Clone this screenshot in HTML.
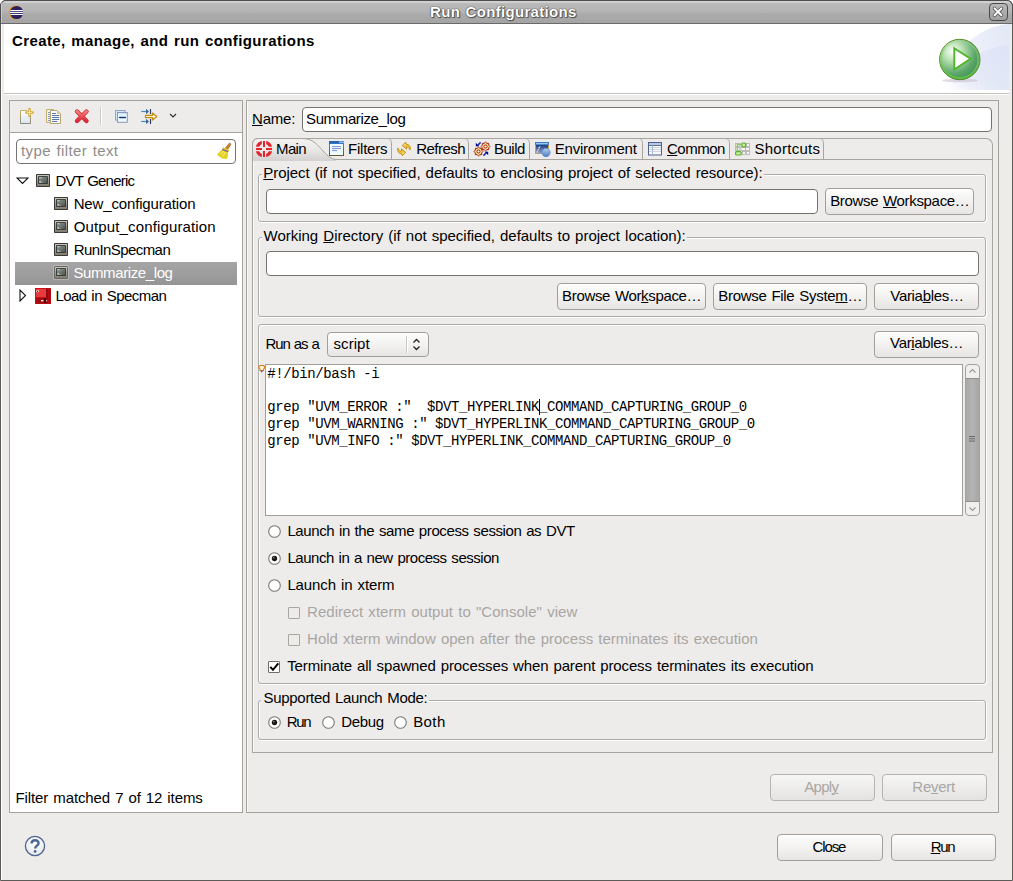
<!DOCTYPE html>
<html><head><meta charset="utf-8"><style>
html,body{margin:0;padding:0;width:1013px;height:881px;overflow:hidden;background:#fff}
u{text-decoration:underline;text-underline-offset:1px;text-decoration-thickness:1px}
</style></head><body>
<div style="position:absolute;left:0;top:0;width:1013px;height:881px;overflow:hidden">
<div style="position:absolute;left:0px;top:0px;width:1013px;height:881px;box-sizing:border-box;background:#edeceb;border:1px solid #5d5b57;border-radius:6px 6px 0 0"></div><div style="position:absolute;left:1px;top:24px;width:1px;height:856px;box-sizing:border-box;background:#fff"></div><div style="position:absolute;left:0px;top:0px;width:1013px;height:24px;box-sizing:border-box;background:linear-gradient(#d0d0d0 0px,#d0d0d0 2px,#bababa 2px,#b4b4b4 11px,#ababab 13px,#a4a4a4 22px);border:1px solid #4f4f4f;border-bottom-color:#6a6a6a;border-radius:6px 6px 0 0"></div><div style="position:absolute;left:1px;top:1px;width:1px;height:22px;box-sizing:border-box;background:rgba(255,255,255,.35)"></div><svg style="position:absolute;left:8px;top:5px;" width="17" height="16" viewBox="0 0 17 16"><circle cx="7.6" cy="7.5" r="6.9" fill="#f39c12"/><circle cx="8.6" cy="7.5" r="6.6" fill="#2c2160"/><rect x="2.3" y="5" width="12.6" height="1.1" fill="#fff"/><rect x="2.0" y="6.9" width="13.2" height="1.1" fill="#fff"/><rect x="2.3" y="8.9" width="12.6" height="1.1" fill="#fff"/></svg><div style="position:absolute;left:430.00px;top:2.00px;font:bold 15px 'Liberation Sans', sans-serif;line-height:20px;white-space:pre;color:#fff;letter-spacing:0.315px;word-spacing:1.00px;text-shadow:0 0 1px #333,0 0 1px #333,1px 1px 1px #555">Run Configurations</div><div style="position:absolute;left:989px;top:3px;width:19px;height:18px;box-sizing:border-box;border:1px solid #4a4a4a;border-radius:4px;background:linear-gradient(#b9b9b9,#a0a0a0)"></div><svg style="position:absolute;left:990px;top:4px;" width="17" height="16" viewBox="0 0 17 16"><path d="M4.6 4.4 L11.4 11.3 M11.4 4.4 L4.6 11.3" stroke="#5a5a5a" stroke-width="3.6" stroke-linecap="round"/><path d="M4.6 4.4 L11.4 11.3 M11.4 4.4 L4.6 11.3" stroke="#fff" stroke-width="2" stroke-linecap="round"/></svg><div style="position:absolute;left:4px;top:24px;width:1005px;height:69px;box-sizing:border-box;background:#fff"></div><div style="position:absolute;left:4px;top:93px;width:1005px;height:1px;box-sizing:border-box;background:#c3c1bd"></div><div style="position:absolute;left:4px;top:94px;width:1005px;height:1px;box-sizing:border-box;background:#fff"></div><div style="position:absolute;left:12.00px;top:31.00px;font:bold 15px 'Liberation Sans', sans-serif;line-height:20px;white-space:pre;color:#000;letter-spacing:0.404px;word-spacing:1.00px;">Create, manage, and run configurations</div><svg style="position:absolute;left:920px;top:24px;" width="89" height="66" viewBox="0 0 89 66"><defs><linearGradient id="sw" x1="0" y1="0.7" x2="1" y2="0.3"><stop offset="0" stop-color="#fff" stop-opacity="0"/><stop offset="0.35" stop-color="#f3f5fc"/><stop offset="1" stop-color="#e4e9f7"/></linearGradient><linearGradient id="sw2" x1="0" y1="1" x2="1" y2="0"><stop offset="0" stop-color="#dfe6f6" stop-opacity="0"/><stop offset="0.45" stop-color="#e0e6f6"/><stop offset="1" stop-color="#dbe2f5"/></linearGradient></defs><path d="M89 0 C66 2 42 14 10 66 L89 66 Z" fill="url(#sw)"/><path d="M89 21 C74 22 60 27 48 38 C40 46 34 56 28 66 L89 66 Z" fill="url(#sw2)" opacity=".75"/></svg><svg style="position:absolute;left:936px;top:36px;" width="48" height="50" viewBox="0 0 48 50"><defs><radialGradient id="pg" cx="0.33" cy="0.3" r="0.8"><stop offset="0" stop-color="#ffffff"/><stop offset="0.3" stop-color="#b8e0b0"/><stop offset="0.7" stop-color="#5aa56a"/><stop offset="1" stop-color="#3c8a50"/></radialGradient><linearGradient id="pr" x1="0" y1="0" x2="0" y2="1"><stop offset="0" stop-color="#9cd890" stop-opacity=".3"/><stop offset="1" stop-color="#5cc040"/></linearGradient></defs><ellipse cx="24" cy="44.5" rx="18" ry="1.8" fill="#c4b4c8" opacity=".5"/><circle cx="23.8" cy="23.5" r="20.2" fill="url(#pg)" stroke="#5d8a2a" stroke-width="1"/><circle cx="23.8" cy="23.5" r="18.6" fill="none" stroke="url(#pr)" stroke-width="2"/><path d="M18.3 12.2 L34.5 22.8 L18.3 33.5 Z" fill="#fff" stroke="#4fb62c" stroke-width="1.9" stroke-linejoin="miter"/></svg><div style="position:absolute;left:9px;top:100px;width:234px;height:713px;box-sizing:border-box;background:#fff;border:1px solid #a5a29e"></div><div style="position:absolute;left:10px;top:101px;width:232px;height:31px;box-sizing:border-box;background:#edeceb"></div><div style="position:absolute;left:10px;top:132px;width:232px;height:1px;box-sizing:border-box;background:#a5a29e"></div><svg style="position:absolute;left:17px;top:106px;" width="20" height="20" viewBox="0 0 20 20"><defs><linearGradient id="nd" x1="0" y1="0" x2="0" y2="1"><stop offset="0" stop-color="#fbfcff"/><stop offset="1" stop-color="#dbe6f6"/></linearGradient><linearGradient id="nb" x1="0" y1="0" x2="0" y2="1"><stop offset="0" stop-color="#c9b266"/><stop offset="1" stop-color="#8f8b78"/></linearGradient></defs><path d="M3.5 4.5 H10 M13.5 10 V17.5 H3.5 V4.5" fill="url(#nd)" stroke="url(#nb)"/><rect x="4" y="5" width="9" height="12" fill="url(#nd)"/><path d="M12.5 3 V10 M9.3 6.5 H15.7" stroke="#d2ac3a" stroke-width="2.4" stroke-linecap="round"/><path d="M12.5 3.6 V9.4 M9.9 6.5 H15.1" stroke="#fbe79a" stroke-width="0.9"/></svg><svg style="position:absolute;left:43px;top:106px;" width="20" height="20" viewBox="0 0 20 20"><path d="M3.5 3.5 H10.5 L11 4 V16.5 H3.5 Z" fill="#eef3fa" stroke="#c2ae6e"/><path d="M7.5 4.5 H14 L17.5 8 V17.5 H7.5 Z" fill="#f6f9fd" stroke="#b8a670"/><path d="M14 4.5 V8 H17.5 Z" fill="#dcc078"/><path d="M9.5 7.5 H12.5 M9.5 9.5 H15.8 M9.5 11.5 H15.8 M9.5 13.5 H15.8 M9.5 15.5 H13.8" stroke="#5673a8" stroke-width="1.1" stroke-linecap="round"/><path d="M5.2 6.5 H6.8 M5.2 8.5 H6.8 M5.2 10.5 H6.8 M5.2 12.5 H6.8 M5.2 14.5 H6.8" stroke="#6a86b6" stroke-width="1"/></svg><svg style="position:absolute;left:72px;top:106px;" width="20" height="20" viewBox="0 0 20 20"><defs><linearGradient id="xg" x1="0" y1="0" x2="0" y2="1"><stop offset="0" stop-color="#f47c7c"/><stop offset="1" stop-color="#d8283a"/></linearGradient></defs><path d="M5 5.5 L14.5 15 M14.5 5.5 L5 15" stroke="#cf2a33" stroke-width="4.4" stroke-linecap="round"/><path d="M5 5.5 L14.5 15 M14.5 5.5 L5 15" stroke="url(#xg)" stroke-width="3" stroke-linecap="round"/></svg><div style="position:absolute;left:100px;top:107px;width:1px;height:18px;box-sizing:border-box;background:#cfcdc9"></div><div style="position:absolute;left:101px;top:107px;width:1px;height:18px;box-sizing:border-box;background:#fff"></div><svg style="position:absolute;left:112px;top:106px;" width="20" height="20" viewBox="0 0 20 20"><defs><linearGradient id="cg" x1="0" y1="0" x2="0" y2="1"><stop offset="0" stop-color="#c2e4fb"/><stop offset="0.45" stop-color="#fafdff"/><stop offset="1" stop-color="#e6f4fd"/></linearGradient></defs><rect x="3.5" y="4.5" width="9.5" height="9.5" fill="#cde9fb" stroke="#99a3bd"/><rect x="5.5" y="6.5" width="9.8" height="9.8" fill="url(#cg)" stroke="#8e98b2"/><path d="M7.6 11.5 H13.4" stroke="#0b3d7a" stroke-width="1.6" stroke-linecap="round"/></svg><svg style="position:absolute;left:139px;top:106px;" width="20" height="20" viewBox="0 0 20 20"><path d="M2.2 5.5 H7.5" stroke="#4a8ac0" stroke-width="1.2"/><path d="M7 2.8 L10 5.5 L7 8.2 Z" fill="#3f6a8e"/><path d="M11.5 3 V8" stroke="#2f3f66" stroke-width="1.2"/><path d="M2.2 15.5 H7.5" stroke="#4a8ac0" stroke-width="1.2"/><path d="M7 12.8 L10 15.5 L7 18.2 Z" fill="#3f6a8e"/><path d="M11.5 13 V18" stroke="#2f3f66" stroke-width="1.2"/><path d="M6.5 9.3 H13.5 V7 L17.8 10.5 L13.5 14 V11.7 H6.5 Z" fill="#fff4c4" stroke="#c48a14" stroke-width="1.2" stroke-linejoin="round"/></svg><svg style="position:absolute;left:169px;top:113px;" width="8" height="5" viewBox="0 0 8 5"><path d="M1 1 L4 4 L7 1" fill="none" stroke="#333" stroke-width="1.2"/></svg><div style="position:absolute;left:16px;top:139px;width:220px;height:25px;box-sizing:border-box;background:#fff;border:1px solid #75736f;border-radius:4px"></div><div style="position:absolute;left:21.00px;top:141.00px;font:normal 15px 'Liberation Sans', sans-serif;line-height:20px;white-space:pre;color:#8f8c88;letter-spacing:0.384px;word-spacing:1.00px;">type filter text</div><svg style="position:absolute;left:213px;top:140px;" width="22" height="22" viewBox="0 0 22 22"><path d="M12.3 8.2 L15.8 3.8 C16.6 2.8 18.4 3.4 17.6 4.9 L14.6 9.6 Z" fill="#c98a34" stroke="#9a5e16" stroke-width=".7"/><path d="M10 7 L16.5 10.3 L15 12 L14.7 17.5 L13.5 19 L9 18.5 L4 14.8 L6 12.2 L9.3 9.6 Z" fill="#e6d21e"/><path d="M7 14 L11 11 M9.5 16.5 L12.5 12" stroke="#f6ee90" stroke-width="1"/><path d="M9.2 9.3 L15.2 11.6" stroke="#7d5aa8" stroke-width="1.3"/></svg><svg style="position:absolute;left:16px;top:177px;" width="13" height="8" viewBox="0 0 13 8"><path d="M1 1 H12 L6.5 6.5 Z" fill="none" stroke="#111" stroke-width="1.1"/></svg><svg style="position:absolute;left:33px;top:172px;" width="20" height="18" viewBox="0 0 20 18"><defs><linearGradient id="tb" x1="0" y1="0" x2="0" y2="1"><stop offset="0" stop-color="#c9c5bb"/><stop offset="1" stop-color="#7f7b70"/></linearGradient><linearGradient id="ts" x1="0" y1="0" x2="1" y2="1"><stop offset="0" stop-color="#8c9691"/><stop offset="1" stop-color="#4d5551"/></linearGradient></defs><rect x="3" y="2" width="14" height="13" rx="0.8" fill="#3a3935"/><rect x="4" y="3" width="12" height="11" fill="url(#tb)"/><rect x="5.2" y="4.2" width="9.6" height="7.6" fill="#232725"/><rect x="6" y="5" width="8" height="6" fill="url(#ts)"/><rect x="6.2" y="5.3" width="2.6" height="0.9" fill="#c4ccc8"/><rect x="6.3" y="9.3" width="1.8" height="1.3" fill="#d8dedb"/><rect x="8.6" y="10" width="1" height="0.8" fill="#c4ccc8"/></svg><div style="position:absolute;left:55.40px;top:171.00px;font:normal 15px 'Liberation Sans', sans-serif;line-height:20px;white-space:pre;color:#000;letter-spacing:-0.779px;word-spacing:1.00px;">DVT Generic</div><svg style="position:absolute;left:51px;top:195px;" width="20" height="18" viewBox="0 0 20 18"><defs><linearGradient id="tb" x1="0" y1="0" x2="0" y2="1"><stop offset="0" stop-color="#c9c5bb"/><stop offset="1" stop-color="#7f7b70"/></linearGradient><linearGradient id="ts" x1="0" y1="0" x2="1" y2="1"><stop offset="0" stop-color="#8c9691"/><stop offset="1" stop-color="#4d5551"/></linearGradient></defs><rect x="3" y="2" width="14" height="13" rx="0.8" fill="#3a3935"/><rect x="4" y="3" width="12" height="11" fill="url(#tb)"/><rect x="5.2" y="4.2" width="9.6" height="7.6" fill="#232725"/><rect x="6" y="5" width="8" height="6" fill="url(#ts)"/><rect x="6.2" y="5.3" width="2.6" height="0.9" fill="#c4ccc8"/><rect x="6.3" y="9.3" width="1.8" height="1.3" fill="#d8dedb"/><rect x="8.6" y="10" width="1" height="0.8" fill="#c4ccc8"/></svg><div style="position:absolute;left:73.70px;top:194.00px;font:normal 15px 'Liberation Sans', sans-serif;line-height:20px;white-space:pre;color:#000;letter-spacing:-0.150px;word-spacing:1.00px;">New_configuration</div><svg style="position:absolute;left:51px;top:218px;" width="20" height="18" viewBox="0 0 20 18"><defs><linearGradient id="tb" x1="0" y1="0" x2="0" y2="1"><stop offset="0" stop-color="#c9c5bb"/><stop offset="1" stop-color="#7f7b70"/></linearGradient><linearGradient id="ts" x1="0" y1="0" x2="1" y2="1"><stop offset="0" stop-color="#8c9691"/><stop offset="1" stop-color="#4d5551"/></linearGradient></defs><rect x="3" y="2" width="14" height="13" rx="0.8" fill="#3a3935"/><rect x="4" y="3" width="12" height="11" fill="url(#tb)"/><rect x="5.2" y="4.2" width="9.6" height="7.6" fill="#232725"/><rect x="6" y="5" width="8" height="6" fill="url(#ts)"/><rect x="6.2" y="5.3" width="2.6" height="0.9" fill="#c4ccc8"/><rect x="6.3" y="9.3" width="1.8" height="1.3" fill="#d8dedb"/><rect x="8.6" y="10" width="1" height="0.8" fill="#c4ccc8"/></svg><div style="position:absolute;left:73.70px;top:217.00px;font:normal 15px 'Liberation Sans', sans-serif;line-height:20px;white-space:pre;color:#000;letter-spacing:0.141px;word-spacing:1.00px;">Output_configuration</div><svg style="position:absolute;left:51px;top:241px;" width="20" height="18" viewBox="0 0 20 18"><defs><linearGradient id="tb" x1="0" y1="0" x2="0" y2="1"><stop offset="0" stop-color="#c9c5bb"/><stop offset="1" stop-color="#7f7b70"/></linearGradient><linearGradient id="ts" x1="0" y1="0" x2="1" y2="1"><stop offset="0" stop-color="#8c9691"/><stop offset="1" stop-color="#4d5551"/></linearGradient></defs><rect x="3" y="2" width="14" height="13" rx="0.8" fill="#3a3935"/><rect x="4" y="3" width="12" height="11" fill="url(#tb)"/><rect x="5.2" y="4.2" width="9.6" height="7.6" fill="#232725"/><rect x="6" y="5" width="8" height="6" fill="url(#ts)"/><rect x="6.2" y="5.3" width="2.6" height="0.9" fill="#c4ccc8"/><rect x="6.3" y="9.3" width="1.8" height="1.3" fill="#d8dedb"/><rect x="8.6" y="10" width="1" height="0.8" fill="#c4ccc8"/></svg><div style="position:absolute;left:73.70px;top:240.00px;font:normal 15px 'Liberation Sans', sans-serif;line-height:20px;white-space:pre;color:#000;letter-spacing:-0.578px;word-spacing:1.00px;">RunInSpecman</div><div style="position:absolute;left:15px;top:262px;width:222px;height:23px;box-sizing:border-box;background:linear-gradient(#a6a6a6,#959595)"></div><svg style="position:absolute;left:51px;top:264px;" width="20" height="18" viewBox="0 0 20 18"><defs><linearGradient id="tb" x1="0" y1="0" x2="0" y2="1"><stop offset="0" stop-color="#c9c5bb"/><stop offset="1" stop-color="#7f7b70"/></linearGradient><linearGradient id="ts" x1="0" y1="0" x2="1" y2="1"><stop offset="0" stop-color="#8c9691"/><stop offset="1" stop-color="#4d5551"/></linearGradient></defs><rect x="3" y="2" width="14" height="13" rx="0.8" fill="#3a3935"/><rect x="4" y="3" width="12" height="11" fill="url(#tb)"/><rect x="5.2" y="4.2" width="9.6" height="7.6" fill="#232725"/><rect x="6" y="5" width="8" height="6" fill="url(#ts)"/><rect x="6.2" y="5.3" width="2.6" height="0.9" fill="#c4ccc8"/><rect x="6.3" y="9.3" width="1.8" height="1.3" fill="#d8dedb"/><rect x="8.6" y="10" width="1" height="0.8" fill="#c4ccc8"/><rect x="3" y="2" width="14" height="13" fill="none" stroke="#fff" stroke-width=".8" opacity=".6"/></svg><div style="position:absolute;left:73.40px;top:263.00px;font:normal 15px 'Liberation Sans', sans-serif;line-height:20px;white-space:pre;color:#fff;letter-spacing:-0.389px;word-spacing:1.00px;">Summarize_log</div><svg style="position:absolute;left:19px;top:289px;" width="8" height="13" viewBox="0 0 8 13"><path d="M1 1 V12 L6.5 6.5 Z" fill="none" stroke="#111" stroke-width="1.1"/></svg><svg style="position:absolute;left:33px;top:286px;" width="20" height="20" viewBox="0 0 20 20"><rect x="2" y="2" width="16" height="16" fill="#cc0f17"/><rect x="3" y="3" width="10" height="8" fill="#e63a3e"/><rect x="13" y="2.5" width="2" height="15" fill="#7a0a0e" opacity=".7"/><rect x="15.5" y="2.5" width="2" height="15" fill="#9a0c12"/><rect x="3" y="12" width="10" height="5.5" fill="#a80c12"/><rect x="11" y="12" width="2" height="5" fill="#3a0406" opacity=".8"/><ellipse cx="4.6" cy="5.3" rx="1.5" ry="1" fill="#fff"/><circle cx="4.6" cy="5.3" r=".6" fill="#000"/><rect x="8" y="14" width="2.4" height="1.3" fill="#fff"/><rect x="13.2" y="14" width="1" height="1.3" fill="#ffc8c8"/></svg><div style="position:absolute;left:55.40px;top:286.00px;font:normal 15px 'Liberation Sans', sans-serif;line-height:20px;white-space:pre;color:#000;letter-spacing:-0.515px;word-spacing:1.00px;">Load in Specman</div><div style="position:absolute;left:15.50px;top:788.00px;font:normal 15px 'Liberation Sans', sans-serif;line-height:20px;white-space:pre;color:#000;letter-spacing:-0.103px;word-spacing:1.00px;">Filter matched 7 of 12 items</div><div style="position:absolute;left:246px;top:100px;width:753px;height:713px;box-sizing:border-box;border:1px solid #a5a29e"></div><div style="position:absolute;left:247px;top:101px;width:1px;height:711px;box-sizing:border-box;background:#fafafa"></div><div style="position:absolute;left:252.00px;top:109.00px;font:normal 15px 'Liberation Sans', sans-serif;line-height:20px;white-space:pre;color:#000;letter-spacing:-0.203px;word-spacing:1.00px;"><u>N</u>ame:</div><div style="position:absolute;left:302px;top:107px;width:690px;height:25px;box-sizing:border-box;background:#fff;border:1px solid #75736f;border-radius:4px"></div><div style="position:absolute;left:306.00px;top:109.00px;font:normal 15px 'Liberation Sans', sans-serif;line-height:20px;white-space:pre;color:#000;letter-spacing:-0.364px;word-spacing:1.00px;">Summarize_log</div><div style="position:absolute;left:252px;top:159px;width:741px;height:594px;box-sizing:border-box;border:1px solid #a8a5a1;border-top:none"></div><div style="position:absolute;left:253px;top:160px;width:1px;height:592px;box-sizing:border-box;background:#fafafa"></div><div style="position:absolute;left:333px;top:159px;width:660px;height:1px;box-sizing:border-box;background:#a8a5a1"></div><div style="position:absolute;left:252px;top:138px;width:741px;height:30px;box-sizing:border-box;border:1px solid #a8a5a1;border-bottom:none;border-radius:6px 7px 0 0"></div><svg style="position:absolute;left:252px;top:138px;" width="84" height="23" viewBox="0 0 84 23"><defs><linearGradient id="mt" x1="0" y1="0" x2="0" y2="1"><stop offset="0" stop-color="#f4f3f2"/><stop offset="0.5" stop-color="#e9e8e6"/><stop offset="1" stop-color="#d2d1cf"/></linearGradient></defs><path d="M0.5 23 V6.5 Q0.5 0.5 6.5 0.5 H50 C62 0.5 66 8 72 14 C76 18 79 21 84 21.5 V23 Z" fill="url(#mt)"/><path d="M0.5 23 V6.5 Q0.5 0.5 6.5 0.5 H50 C62 0.5 66 8 72 14 C76 18 79 21 84 21.5" fill="none" stroke="#a8a5a1" stroke-width="1"/></svg><svg style="position:absolute;left:254px;top:139px;" width="20" height="20" viewBox="0 0 20 20"><g fill="#e3262b"><rect x="9" y="2" width="2" height="6"/><rect x="9" y="12" width="2" height="6"/><rect x="2" y="9" width="6" height="2"/><rect x="12" y="9" width="6" height="2"/><path d="M2 7.8 C2.4 5 5 2.4 7.8 2 V5.2 C6.6 5.6 5.6 6.6 5.2 7.8 Z"/><path d="M18 7.8 C17.6 5 15 2.4 12.2 2 V5.2 C13.4 5.6 14.4 6.6 14.8 7.8 Z"/><path d="M2 12.2 C2.4 15 5 17.6 7.8 18 V14.8 C6.6 14.4 5.6 13.4 5.2 12.2 Z"/><path d="M18 12.2 C17.6 15 15 17.6 12.2 18 V14.8 C13.4 14.4 14.4 13.4 14.8 12.2 Z"/></g></svg><div style="position:absolute;left:276.10px;top:139.00px;font:normal 15px 'Liberation Sans', sans-serif;line-height:20px;white-space:pre;color:#000;letter-spacing:-0.657px;word-spacing:1.00px;">Main</div><svg style="position:absolute;left:327px;top:139px;" width="20" height="20" viewBox="0 0 20 20"><defs><linearGradient id="fb" x1="0" y1="0" x2="0" y2="1"><stop offset="0" stop-color="#a08030"/><stop offset="1" stop-color="#5e5636"/></linearGradient></defs><rect x="2.5" y="2.5" width="14" height="14" fill="#ecfbfd" stroke="url(#fb)"/><rect x="2" y="2" width="15" height="3" fill="#2a62b0"/><rect x="12" y="2.4" width="5" height="2" fill="#7cbaec"/><rect x="3" y="4.2" width="13" height="0.8" fill="#3b78c8"/><rect x="5" y="7" width="9" height="1.1" fill="#8898d0"/><rect x="5" y="9" width="9" height="1.1" fill="#8898d0"/><rect x="5" y="11" width="5" height="1.1" fill="#8898d0"/><rect x="3" y="15" width="13" height="1" fill="#fff"/></svg><div style="position:absolute;left:348.00px;top:139.00px;font:normal 15px 'Liberation Sans', sans-serif;line-height:20px;white-space:pre;color:#000;letter-spacing:-0.222px;word-spacing:1.00px;">Filters</div><svg style="position:absolute;left:387px;top:138px;" width="6" height="22" viewBox="0 0 6 22"><path d="M0 0.5 C3 0.5 4.5 2 4.5 6 V21" fill="none" stroke="#a8a5a1" stroke-width="1"/></svg><svg style="position:absolute;left:394px;top:139px;" width="20" height="20" viewBox="0 0 20 20"><g stroke="#c48e16" stroke-width="0.9" fill="#ecc23e" stroke-linejoin="round"><path d="M8.2 6.6 L11.8 3.2 L12.2 5.2 C15 5.2 16.8 7.4 16.4 10.6 L15.6 10.6 C15.2 8.6 13.8 7.8 12.4 8 L12.6 10.2 Z"/><path d="M11.8 13.4 L8.2 16.8 L7.8 14.8 C5 14.8 3.2 12.6 3.6 9.4 L4.4 9.4 C4.8 11.4 6.2 12.2 7.6 12 L7.4 9.8 Z"/></g><path d="M11.5 5 L10 6.5 M8.5 15 L10 13.5" stroke="#fff3b8" stroke-width="1"/></svg><div style="position:absolute;left:416.20px;top:139.00px;font:normal 15px 'Liberation Sans', sans-serif;line-height:20px;white-space:pre;color:#000;letter-spacing:-0.530px;word-spacing:1.00px;">Refresh</div><svg style="position:absolute;left:464px;top:138px;" width="6" height="22" viewBox="0 0 6 22"><path d="M0 0.5 C3 0.5 4.5 2 4.5 6 V21" fill="none" stroke="#a8a5a1" stroke-width="1"/></svg><svg style="position:absolute;left:471px;top:139px;" width="20" height="20" viewBox="0 0 20 20"><polygon points="11.90,12.50 10.73,13.84 10.61,15.61 8.84,15.73 7.50,16.90 6.16,15.73 4.39,15.61 4.27,13.84 3.10,12.50 4.27,11.16 4.39,9.39 6.16,9.27 7.50,8.10 8.84,9.27 10.61,9.39 10.73,11.16" fill="#f8ea96" stroke="#a8140e" stroke-width="1.0"/><circle cx="7.5" cy="12.5" r="1.6" fill="#fff8e0" stroke="#a8140e" stroke-width="1"/><polygon points="18.90,7.50 17.73,8.84 17.61,10.61 15.84,10.73 14.50,11.90 13.16,10.73 11.39,10.61 11.27,8.84 10.10,7.50 11.27,6.16 11.39,4.39 13.16,4.27 14.50,3.10 15.84,4.27 17.61,4.39 17.73,6.16" fill="#f8ea96" stroke="#a8140e" stroke-width="1.0"/><circle cx="14.5" cy="7.5" r="1.6" fill="#fff8e0" stroke="#a8140e" stroke-width="1"/><path d="M9.6 3.4 L6 7" stroke="#1a30d0" stroke-width="1.6"/><path d="M4.8 3.8 V7.2 H8.2 Z" fill="#000a80"/><path d="M12.4 16.6 L16 13" stroke="#1a30d0" stroke-width="1.6"/><path d="M17.2 16.2 V12.8 H13.8 Z" fill="#000a80"/></svg><div style="position:absolute;left:494.00px;top:139.00px;font:normal 15px 'Liberation Sans', sans-serif;line-height:20px;white-space:pre;color:#000;letter-spacing:-0.503px;word-spacing:1.00px;">Build</div><svg style="position:absolute;left:525px;top:138px;" width="6" height="22" viewBox="0 0 6 22"><path d="M0 0.5 C3 0.5 4.5 2 4.5 6 V21" fill="none" stroke="#a8a5a1" stroke-width="1"/></svg><svg style="position:absolute;left:532px;top:139px;" width="20" height="20" viewBox="0 0 20 20"><defs><linearGradient id="eb" x1="0" y1="0" x2="0" y2="1"><stop offset="0" stop-color="#1f3c80"/><stop offset="1" stop-color="#9aa4c8"/></linearGradient><linearGradient id="ec" x1="0" y1="0" x2="0" y2="1"><stop offset="0" stop-color="#b4d0ee"/><stop offset="1" stop-color="#4a7fc0"/></linearGradient></defs><rect x="3" y="3" width="14" height="12" fill="#c8a24a"/><rect x="4" y="6" width="12" height="8.5" fill="url(#eb)"/><rect x="3" y="3" width="14" height="3" fill="#3c7cc6"/><rect x="4" y="4" width="12" height="1.2" fill="#96c6ee"/><path d="M4.8 13.6 L8 7" stroke="#fff" stroke-width="1.1" stroke-dasharray="1.5 .8"/><circle cx="14" cy="13.5" r="4.2" fill="url(#ec)" stroke="#4a7cc0" stroke-width=".6"/></svg><div style="position:absolute;left:554.70px;top:139.00px;font:normal 15px 'Liberation Sans', sans-serif;line-height:20px;white-space:pre;color:#000;letter-spacing:-0.204px;word-spacing:1.00px;">Environment</div><svg style="position:absolute;left:638px;top:138px;" width="6" height="22" viewBox="0 0 6 22"><path d="M0 0.5 C3 0.5 4.5 2 4.5 6 V21" fill="none" stroke="#a8a5a1" stroke-width="1"/></svg><svg style="position:absolute;left:645px;top:139px;" width="20" height="20" viewBox="0 0 20 20"><rect x="3.5" y="3.5" width="13" height="12.5" fill="#f6f8fb" stroke="#4d6290"/><rect x="4" y="4" width="12" height="2" fill="#b9c8e0"/><rect x="4" y="6" width="12" height="0.9" fill="#4d6290"/><path d="M4 8.5 H16 M4 10.5 H16 M4 12.5 H16" stroke="#cfd6e4" stroke-width="1"/><path d="M7.5 6.5 V15.5" stroke="#aeb8cc" stroke-width="1"/></svg><div style="position:absolute;left:667.00px;top:139.00px;font:normal 15px 'Liberation Sans', sans-serif;line-height:20px;white-space:pre;color:#000;letter-spacing:-0.501px;word-spacing:1.00px;"><u>C</u>ommon</div><svg style="position:absolute;left:725px;top:138px;" width="6" height="22" viewBox="0 0 6 22"><path d="M0 0.5 C3 0.5 4.5 2 4.5 6 V21" fill="none" stroke="#a8a5a1" stroke-width="1"/></svg><svg style="position:absolute;left:732px;top:139px;" width="20" height="20" viewBox="0 0 20 20"><g fill="#f6f6f4" stroke="#b0b0ae" stroke-width=".8"><rect x="3.4" y="4.4" width="4.5" height="3"/><rect x="14.4" y="4.4" width="3.2" height="3"/><rect x="3.4" y="8.4" width="4.5" height="3"/><rect x="8.9" y="8.4" width="4.5" height="3"/><rect x="13.4" y="8.4" width="4" height="3"/><rect x="10.4" y="12.4" width="3" height="3"/><rect x="14.4" y="12.4" width="3.2" height="3"/></g><path d="M5.3 12 V5.5 H9" fill="none" stroke="#8cc860" stroke-width="1.3"/><rect x="9.8" y="4" width="3.8" height="3.8" rx="1" fill="#c4f29a" stroke="#5fae32" stroke-width="1.2"/><rect x="3.6" y="12.6" width="5.6" height="3.4" rx="1" fill="#c4f29a" stroke="#5fae32" stroke-width="1.2"/></svg><div style="position:absolute;left:754.40px;top:139.00px;font:normal 15px 'Liberation Sans', sans-serif;line-height:20px;white-space:pre;color:#000;letter-spacing:0.280px;word-spacing:1.00px;">Shortcuts</div><svg style="position:absolute;left:819px;top:138px;" width="6" height="22" viewBox="0 0 6 22"><path d="M0 0.5 C3 0.5 4.5 2 4.5 6 V21" fill="none" stroke="#a8a5a1" stroke-width="1"/></svg><div style="position:absolute;left:258px;top:174px;width:728px;height:48px;box-sizing:border-box;border:1px solid #aeaba7;border-radius:3px;box-shadow:inset 1px 1px 0 #fff, 1px 1px 0 #fff"></div><div style="position:absolute;left:262px;top:166px;width:502px;height:17px;box-sizing:border-box;background:#edeceb"></div><div style="position:absolute;left:263.30px;top:163.00px;font:normal 15px 'Liberation Sans', sans-serif;line-height:20px;white-space:pre;color:#000;letter-spacing:-0.066px;word-spacing:1.00px;"><u>P</u>roject (if not specified, defaults to enclosing project of selected resource):</div><div style="position:absolute;left:266px;top:189px;width:552px;height:25px;box-sizing:border-box;background:#fff;border:1px solid #75736f;border-radius:4px"></div><div style="position:absolute;left:825px;top:188px;width:149px;height:27px;box-sizing:border-box;background:linear-gradient(#fdfdfd 0%,#f3f2f1 50%,#e6e5e3 100%);border:1px solid #a29f9b;border-radius:4px;box-shadow:inset 0 1px 0 #fff"></div><div style="position:absolute;left:830.20px;top:191.00px;font:normal 15px 'Liberation Sans', sans-serif;line-height:20px;white-space:pre;color:#000;letter-spacing:-0.333px;word-spacing:1.00px;">Browse <u>W</u>orkspace…</div><div style="position:absolute;left:258px;top:237px;width:728px;height:80px;box-sizing:border-box;border:1px solid #aeaba7;border-radius:3px;box-shadow:inset 1px 1px 0 #fff, 1px 1px 0 #fff"></div><div style="position:absolute;left:262px;top:229px;width:425px;height:17px;box-sizing:border-box;background:#edeceb"></div><div style="position:absolute;left:263.60px;top:226.00px;font:normal 15px 'Liberation Sans', sans-serif;line-height:20px;white-space:pre;color:#000;letter-spacing:-0.024px;word-spacing:1.00px;">Working <u>D</u>irectory (if not specified, defaults to project location):</div><div style="position:absolute;left:266px;top:251px;width:713px;height:25px;box-sizing:border-box;background:#fff;border:1px solid #75736f;border-radius:4px"></div><div style="position:absolute;left:557px;top:283px;width:149px;height:27px;box-sizing:border-box;background:linear-gradient(#fdfdfd 0%,#f3f2f1 50%,#e6e5e3 100%);border:1px solid #a29f9b;border-radius:4px;box-shadow:inset 0 1px 0 #fff"></div><div style="position:absolute;left:562.10px;top:286.00px;font:normal 15px 'Liberation Sans', sans-serif;line-height:20px;white-space:pre;color:#000;letter-spacing:-0.340px;word-spacing:1.00px;">Browse Wor<u>k</u>space…</div><div style="position:absolute;left:713px;top:283px;width:154px;height:27px;box-sizing:border-box;background:linear-gradient(#fdfdfd 0%,#f3f2f1 50%,#e6e5e3 100%);border:1px solid #a29f9b;border-radius:4px;box-shadow:inset 0 1px 0 #fff"></div><div style="position:absolute;left:718.30px;top:286.00px;font:normal 15px 'Liberation Sans', sans-serif;line-height:20px;white-space:pre;color:#000;letter-spacing:-0.296px;word-spacing:1.00px;">Browse File Syste<u>m</u>…</div><div style="position:absolute;left:874px;top:283px;width:105px;height:27px;box-sizing:border-box;background:linear-gradient(#fdfdfd 0%,#f3f2f1 50%,#e6e5e3 100%);border:1px solid #a29f9b;border-radius:4px;box-shadow:inset 0 1px 0 #fff"></div><div style="position:absolute;left:890.30px;top:286.00px;font:normal 15px 'Liberation Sans', sans-serif;line-height:20px;white-space:pre;color:#000;letter-spacing:-0.313px;word-spacing:1.00px;">Varia<u>b</u>les…</div><div style="position:absolute;left:258px;top:324px;width:728px;height:360px;box-sizing:border-box;border:1px solid #aeaba7;border-radius:3px;box-shadow:inset 1px 1px 0 #fff, 1px 1px 0 #fff"></div><div style="position:absolute;left:265.50px;top:333.50px;font:normal 15px 'Liberation Sans', sans-serif;line-height:20px;white-space:pre;color:#000;letter-spacing:-1.113px;word-spacing:1.00px;">Run as a</div><div style="position:absolute;left:327px;top:332px;width:102px;height:25px;box-sizing:border-box;background:linear-gradient(#fdfdfd 0%,#f3f2f1 50%,#e6e5e3 100%);border:1px solid #a29f9b;border-radius:4px;box-shadow:inset 0 1px 0 #fff"></div><div style="position:absolute;left:406px;top:336px;width:1px;height:17px;box-sizing:border-box;background:#c9c7c3"></div><div style="position:absolute;left:407px;top:336px;width:1px;height:17px;box-sizing:border-box;background:#fff"></div><svg style="position:absolute;left:412px;top:338px;" width="10" height="13" viewBox="0 0 10 13"><path d="M1.5 4.5 L4.5 1.5 L7.5 4.5 M1.5 8.5 L4.5 11.5 L7.5 8.5" fill="none" stroke="#222" stroke-width="1.3"/></svg><div style="position:absolute;left:333.60px;top:333.70px;font:normal 15px 'Liberation Sans', sans-serif;line-height:20px;white-space:pre;color:#000;letter-spacing:0.026px;word-spacing:1.00px;">script</div><div style="position:absolute;left:874px;top:331px;width:105px;height:27px;box-sizing:border-box;background:linear-gradient(#fdfdfd 0%,#f3f2f1 50%,#e6e5e3 100%);border:1px solid #a29f9b;border-radius:4px;box-shadow:inset 0 1px 0 #fff"></div><div style="position:absolute;left:890.10px;top:333.30px;font:normal 15px 'Liberation Sans', sans-serif;line-height:20px;white-space:pre;color:#000;letter-spacing:-0.336px;word-spacing:1.00px;">Var<u>i</u>ables…</div><div style="position:absolute;left:265px;top:364px;width:698px;height:152px;box-sizing:border-box;#fff;background:#fff;border:1px solid #a29f9b"></div><svg style="position:absolute;left:258px;top:364px;" width="8" height="9" viewBox="0 0 8 9"><path d="M2 1.5 H5.5 L6.5 2.5 V4 L5.5 5.2 V6.5 H2 V5.2 L1 4 V2.5 Z" fill="#fff3d8" stroke="#e07d10" stroke-width="1.1"/><path d="M2.3 6.8 H5.2 L3.75 8.4 Z" fill="#3a5a8a"/></svg><div style="position:absolute;left:267.30px;top:363.80px;font:normal 14px 'Liberation Mono', monospace;line-height:20px;white-space:pre;color:#000;letter-spacing:-0.410px;word-spacing:0.00px;">#!/bin/bash -i</div><div style="position:absolute;left:267.30px;top:397.30px;font:normal 14px 'Liberation Mono', monospace;line-height:20px;white-space:pre;color:#000;letter-spacing:-0.410px;word-spacing:0.00px;">grep &quot;UVM_ERROR :&quot;  $DVT_HYPERLINK_COMMAND_CAPTURING_GROUP_0</div><div style="position:absolute;left:267.30px;top:414.05px;font:normal 14px 'Liberation Mono', monospace;line-height:20px;white-space:pre;color:#000;letter-spacing:-0.410px;word-spacing:0.00px;">grep &quot;UVM_WARNING :&quot; $DVT_HYPERLINK_COMMAND_CAPTURING_GROUP_0</div><div style="position:absolute;left:267.30px;top:430.80px;font:normal 14px 'Liberation Mono', monospace;line-height:20px;white-space:pre;color:#000;letter-spacing:-0.410px;word-spacing:0.00px;">grep &quot;UVM_INFO :&quot; $DVT_HYPERLINK_COMMAND_CAPTURING_GROUP_0</div><div style="position:absolute;left:539px;top:399px;width:1px;height:16px;box-sizing:border-box;background:#000"></div><div style="position:absolute;left:965px;top:364px;width:15px;height:152px;box-sizing:border-box;background:#f0efee;border:1px solid #a5a29e;border-radius:4px"></div><div style="position:absolute;left:966px;top:378px;width:13px;height:124px;box-sizing:border-box;background:linear-gradient(90deg,#a9a9a9,#b4b4b4 50%,#a6a6a6);border-top:1px solid #8e8e8e;border-bottom:1px solid #8e8e8e"></div><svg style="position:absolute;left:967px;top:366px;" width="11" height="11" viewBox="0 0 11 11"><path d="M2.5 6.5 L5.5 3.5 L8.5 6.5" fill="none" stroke="#9a9895" stroke-width="1.1"/></svg><svg style="position:absolute;left:967px;top:503px;" width="11" height="11" viewBox="0 0 11 11"><path d="M2.5 4.5 L5.5 7.5 L8.5 4.5" fill="none" stroke="#9a9895" stroke-width="1.1"/></svg><svg style="position:absolute;left:968px;top:435px;" width="9" height="8" viewBox="0 0 9 8"><path d="M1 1.5 H7 M1 3.8 H7 M1 6.1 H7" stroke="#666" stroke-width="1"/></svg><svg style="position:absolute;left:267.5px;top:525.0px;" width="13" height="13" viewBox="0 0 13 13"><circle cx="6.5" cy="6.5" r="5.8" fill="#fff" stroke="#7b7975" stroke-width="1.1"/></svg><div style="position:absolute;left:287.40px;top:521.00px;font:normal 15px 'Liberation Sans', sans-serif;line-height:20px;white-space:pre;color:#000;letter-spacing:-0.401px;word-spacing:1.00px;">Launch in the same process session as DVT</div><svg style="position:absolute;left:267.5px;top:552.0px;" width="13" height="13" viewBox="0 0 13 13"><circle cx="6.5" cy="6.5" r="5.8" fill="#fff" stroke="#7b7975" stroke-width="1.1"/><circle cx="6.5" cy="6.5" r="2.7" fill="#1a1a1a"/><circle cx="5.8" cy="5.6" r="0.9" fill="#777"/></svg><div style="position:absolute;left:287.40px;top:548.00px;font:normal 15px 'Liberation Sans', sans-serif;line-height:20px;white-space:pre;color:#000;letter-spacing:-0.464px;word-spacing:1.00px;">Launch in a new process session</div><svg style="position:absolute;left:267.5px;top:579.0px;" width="13" height="13" viewBox="0 0 13 13"><circle cx="6.5" cy="6.5" r="5.8" fill="#fff" stroke="#7b7975" stroke-width="1.1"/></svg><div style="position:absolute;left:287.40px;top:575.00px;font:normal 15px 'Liberation Sans', sans-serif;line-height:20px;white-space:pre;color:#000;letter-spacing:-0.109px;word-spacing:1.00px;">Launch in xterm</div><div style="position:absolute;left:288px;top:607px;width:12px;height:12px;box-sizing:border-box;background:#edeceb;border:1px solid #a9a6a2;border-radius:1px"></div><div style="position:absolute;left:307.10px;top:602.00px;font:normal 15px 'Liberation Sans', sans-serif;line-height:20px;white-space:pre;color:#a9a6a2;letter-spacing:0.027px;word-spacing:1.00px;">Redirect xterm output to &quot;Console&quot; view</div><div style="position:absolute;left:288px;top:634px;width:12px;height:12px;box-sizing:border-box;background:#edeceb;border:1px solid #a9a6a2;border-radius:1px"></div><div style="position:absolute;left:307.10px;top:629.00px;font:normal 15px 'Liberation Sans', sans-serif;line-height:20px;white-space:pre;color:#a9a6a2;letter-spacing:-0.002px;word-spacing:1.00px;">Hold xterm window open after the process terminates its execution</div><div style="position:absolute;left:268px;top:661px;width:12px;height:12px;box-sizing:border-box;background:#fff;border:1px solid #6f6d69;border-radius:1px"></div><svg style="position:absolute;left:268px;top:661px;" width="12" height="12" viewBox="0 0 12 12"><path d="M2.3 5.8 L5 8.8 L10.3 2.3" fill="none" stroke="#000" stroke-width="2"/></svg><div style="position:absolute;left:287.20px;top:656.00px;font:normal 15px 'Liberation Sans', sans-serif;line-height:20px;white-space:pre;color:#000;letter-spacing:-0.128px;word-spacing:1.00px;">Terminate all spawned processes when parent process terminates its execution</div><div style="position:absolute;left:258px;top:700px;width:728px;height:40px;box-sizing:border-box;border:1px solid #aeaba7;border-radius:3px;box-shadow:inset 1px 1px 0 #fff, 1px 1px 0 #fff"></div><div style="position:absolute;left:261px;top:690px;width:168px;height:17px;box-sizing:border-box;background:#edeceb"></div><div style="position:absolute;left:263.50px;top:688.00px;font:normal 15px 'Liberation Sans', sans-serif;line-height:20px;white-space:pre;color:#000;letter-spacing:-0.295px;word-spacing:1.00px;">Supported Launch Mode:</div><svg style="position:absolute;left:267.5px;top:716.0px;" width="13" height="13" viewBox="0 0 13 13"><circle cx="6.5" cy="6.5" r="5.8" fill="#fff" stroke="#7b7975" stroke-width="1.1"/><circle cx="6.5" cy="6.5" r="2.7" fill="#1a1a1a"/><circle cx="5.8" cy="5.6" r="0.9" fill="#777"/></svg><div style="position:absolute;left:286.70px;top:712.00px;font:normal 15px 'Liberation Sans', sans-serif;line-height:20px;white-space:pre;color:#000;letter-spacing:-1.337px;word-spacing:1.00px;">Run</div><svg style="position:absolute;left:321.5px;top:716.0px;" width="13" height="13" viewBox="0 0 13 13"><circle cx="6.5" cy="6.5" r="5.8" fill="#fff" stroke="#7b7975" stroke-width="1.1"/></svg><div style="position:absolute;left:341.20px;top:712.00px;font:normal 15px 'Liberation Sans', sans-serif;line-height:20px;white-space:pre;color:#000;letter-spacing:-0.340px;word-spacing:1.00px;">Debug</div><svg style="position:absolute;left:393.5px;top:716.0px;" width="13" height="13" viewBox="0 0 13 13"><circle cx="6.5" cy="6.5" r="5.8" fill="#fff" stroke="#7b7975" stroke-width="1.1"/></svg><div style="position:absolute;left:413.20px;top:712.00px;font:normal 15px 'Liberation Sans', sans-serif;line-height:20px;white-space:pre;color:#000;letter-spacing:0.395px;word-spacing:1.00px;">Both</div><div style="position:absolute;left:770px;top:774px;width:105px;height:27px;box-sizing:border-box;background:linear-gradient(#f6f6f5,#e4e3e1);border:1px solid #b6b3af;border-radius:4px"></div><div style="position:absolute;left:804.20px;top:777.00px;font:normal 15px 'Liberation Sans', sans-serif;line-height:20px;white-space:pre;color:#a9a6a2;letter-spacing:-0.680px;word-spacing:1.00px;">Appl<u>y</u></div><div style="position:absolute;left:882px;top:774px;width:105px;height:27px;box-sizing:border-box;background:linear-gradient(#f6f6f5,#e4e3e1);border:1px solid #b6b3af;border-radius:4px"></div><div style="position:absolute;left:912.30px;top:777.00px;font:normal 15px 'Liberation Sans', sans-serif;line-height:20px;white-space:pre;color:#a9a6a2;letter-spacing:-0.242px;word-spacing:1.00px;">Re<u>v</u>ert</div><svg style="position:absolute;left:24px;top:835px;" width="22" height="22" viewBox="0 0 22 22"><defs><radialGradient id="hg" cx="0.5" cy="0.35" r="0.7"><stop offset="0" stop-color="#fff"/><stop offset="1" stop-color="#e4e6ea"/></radialGradient></defs><circle cx="11" cy="11" r="9.6" fill="url(#hg)" stroke="#4d6590" stroke-width="1.3"/><path d="M7.6 8.4 C7.6 4.2 14.6 4.2 14.6 8.2 C14.6 10.6 11.2 10.8 11.2 13.4" fill="none" stroke="#4d6590" stroke-width="2.4"/><circle cx="11.1" cy="16.4" r="1.4" fill="#4d6590"/></svg><div style="position:absolute;left:777px;top:834px;width:106px;height:27px;box-sizing:border-box;background:linear-gradient(#fdfdfd 0%,#f3f2f1 50%,#e6e5e3 100%);border:1px solid #a29f9b;border-radius:4px;box-shadow:inset 0 1px 0 #fff"></div><div style="position:absolute;left:812.60px;top:837.00px;font:normal 15px 'Liberation Sans', sans-serif;line-height:20px;white-space:pre;color:#000;letter-spacing:-1.127px;word-spacing:1.00px;">Close</div><div style="position:absolute;left:891px;top:834px;width:105px;height:27px;box-sizing:border-box;background:linear-gradient(#fdfdfd 0%,#f3f2f1 50%,#e6e5e3 100%);border:1px solid #a29f9b;border-radius:4px;box-shadow:inset 0 1px 0 #fff"></div><div style="position:absolute;left:930.70px;top:837.00px;font:normal 15px 'Liberation Sans', sans-serif;line-height:20px;white-space:pre;color:#000;letter-spacing:-1.337px;word-spacing:1.00px;"><u>R</u>un</div>
</div></body></html>
